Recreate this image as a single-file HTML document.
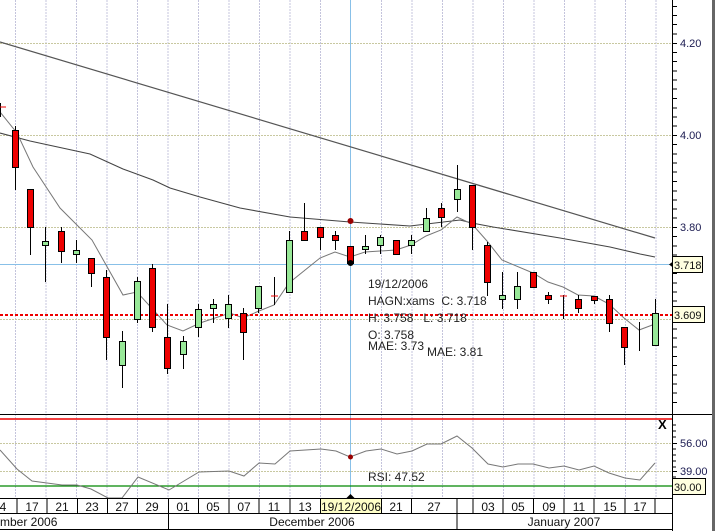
<!DOCTYPE html>
<html><head><meta charset="utf-8"><style>
html,body{margin:0;padding:0;background:#fff;}
svg{display:block;font-family:"Liberation Sans",sans-serif;}
</style></head><body>
<svg width="715" height="531" viewBox="0 0 715 531" xmlns="http://www.w3.org/2000/svg">
<rect width="715" height="531" fill="#fff"/>
<g stroke="#c4c4dc" stroke-width="1" stroke-dasharray="2,1">
<path d="M15.5 0V498M46 0V498M76.5 0V498M107 0V498M137.5 0V498M168 0V498M198.5 0V498M229 0V498M259.5 0V498M290 0V498M320.5 0V498M381.5 0V498M412 0V498M442.5 0V498M473 0V498M503.5 0V498M534 0V498M564.5 0V498M595 0V498M625.5 0V498M656 0V498"/>
</g>
<g stroke="#c8c8a0" stroke-width="1" stroke-dasharray="2,1">
<path d="M0 43.5H672M0 135.5H672M0 227.5H672M0 319.5H672M0 443.5H672M0 471.5H672"/>
</g>
<path d="M350.5 0V498M0 264.5H672" stroke="#88c0e8" stroke-width="1"/>
<path d="M0 42L655 238" stroke="#555" stroke-width="1.2" fill="none"/>
<polyline fill="none" stroke="#444" stroke-width="1.1" points="0,133 30,141 90,154 123,169 153,180 170,188 200,197 240,208 290,217 350,222 410,226 460,220 472,223 493,227 560,238 610,247 640,254 655,257"/>
<polyline fill="none" stroke="#777" stroke-width="1" points="0,112 17,133 33,167 60,208 92,240 123,295 137,292 167,325 183,331 200,323 230,313 243,318 259,311 274,305 289,283 320,258 335,252 350,257 365,252 396,250 411,245 426,236 441,230 457,217 472,224 487,241 502,260 533,273 548,282 563,287 578,295 594,296 609,304 624,318 639,330 655,324"/>
<path d="M0 315H672" stroke="#e00" stroke-width="2" stroke-dasharray="3,2"/>
<g stroke="#000" stroke-width="1">
<path d="M0.5 103V117M15.5 126V190M30.5 189V255M45.5 227V282M61.5 227V263M76.5 240V263M91.5 258V287M106.5 270V360M122.5 331V388M137.5 277V323M152.5 264V332M167.5 304V374M183.5 336V369M198.5 304V337M213.5 299V323M228.5 295V328M243.5 308V360M258.5 286V313M274.5 277V305M289.5 231V292M304.5 203V240M320.5 227V250M335.5 231V250M350.5 246V263M365.5 235V254M380.5 235V254M396.5 240V254M411.5 235V254M426.5 208V231M441.5 203V227M457.5 165V212M472.5 185V250M487.5 242V296M502.5 272V309M517.5 272V309M533.5 272V287M548.5 292V304M563.5 295V319M578.5 295V313M594.5 296V304M609.5 295V332M624.5 327V365M639.5 322V351M655.5 299V345"/>
</g>
<g stroke="#000" stroke-width="1">
<rect x="12.5" y="130.5" width="6" height="37" fill="#e00"/>
<rect x="27.5" y="189.5" width="6" height="38" fill="#e00"/>
<rect x="42.5" y="241.5" width="6" height="4" fill="#98e898"/>
<rect x="58.5" y="231.5" width="6" height="20" fill="#e00"/>
<rect x="73.5" y="250.5" width="6" height="4" fill="#98e898"/>
<rect x="88.5" y="258.5" width="6" height="15" fill="#e00"/>
<rect x="103.5" y="277.5" width="6" height="60" fill="#e00"/>
<rect x="119.5" y="341.5" width="6" height="24" fill="#98e898"/>
<rect x="134.5" y="281.5" width="6" height="38" fill="#98e898"/>
<rect x="149.5" y="268.5" width="6" height="59" fill="#e00"/>
<rect x="164.5" y="337.5" width="6" height="31" fill="#e00"/>
<rect x="180.5" y="341.5" width="6" height="13" fill="#98e898"/>
<rect x="195.5" y="309.5" width="6" height="18" fill="#98e898"/>
<rect x="210.5" y="304.5" width="6" height="4" fill="#98e898"/>
<rect x="225.5" y="304.5" width="6" height="14" fill="#98e898"/>
<rect x="240.5" y="313.5" width="6" height="19" fill="#e00"/>
<rect x="255.5" y="286.5" width="6" height="22" fill="#98e898"/>
<rect x="286.5" y="240.5" width="6" height="52" fill="#98e898"/>
<rect x="301.5" y="231.5" width="6" height="9" fill="#e00"/>
<rect x="317.5" y="227.5" width="6" height="10" fill="#e00"/>
<rect x="332.5" y="235.5" width="6" height="5" fill="#e00"/>
<rect x="347.5" y="246.5" width="6" height="17" fill="#e00"/>
<rect x="362.5" y="246.5" width="6" height="3" fill="#98e898"/>
<rect x="377.5" y="237.5" width="6" height="8" fill="#98e898"/>
<rect x="393.5" y="240.5" width="6" height="14" fill="#e00"/>
<rect x="408.5" y="240.5" width="6" height="5" fill="#98e898"/>
<rect x="423.5" y="218.5" width="6" height="13" fill="#98e898"/>
<rect x="438.5" y="208.5" width="6" height="9" fill="#e00"/>
<rect x="454.5" y="189.5" width="6" height="10" fill="#98e898"/>
<rect x="469.5" y="185.5" width="6" height="42" fill="#e00"/>
<rect x="484.5" y="245.5" width="6" height="37" fill="#e00"/>
<rect x="499.5" y="295.5" width="6" height="4" fill="#98e898"/>
<rect x="514.5" y="286.5" width="6" height="13" fill="#98e898"/>
<rect x="530.5" y="272.5" width="6" height="15" fill="#e00"/>
<rect x="545.5" y="295.5" width="6" height="4" fill="#e00"/>
<rect x="575.5" y="299.5" width="6" height="9" fill="#e00"/>
<rect x="591.5" y="296.5" width="6" height="4" fill="#e00"/>
<rect x="606.5" y="299.5" width="6" height="24" fill="#e00"/>
<rect x="621.5" y="327.5" width="6" height="20" fill="#e00"/>
<rect x="652.5" y="313.5" width="6" height="32" fill="#98e898"/>
</g>
<path d="M271 296H278M560 296H567M0 107H6" stroke="#e00" stroke-width="1"/>
<circle cx="350.5" cy="221" r="3" fill="#900"/>
<circle cx="350.5" cy="263" r="3" fill="#000"/>
<g font-size="12" fill="#222">
<text x="368" y="288">19/12/2006</text>
<text x="368" y="305">HAGN:xams&#160;&#160;C: 3.718</text>
<text x="368" y="322">H: 3.758&#160;&#160;&#160;L: 3.718</text>
<text x="368" y="339">O: 3.758</text>
<text x="368" y="350">MAE: 3.73</text>
<text x="427" y="356">MAE: 3.81</text>
</g>
<path d="M0 414.5H715" stroke="#000" stroke-width="1"/>
<path d="M0 419H672" stroke="#e00" stroke-width="1.5"/>
<path d="M0 486H672" stroke="#080" stroke-width="1.2"/>
<polyline fill="none" stroke="#777" stroke-width="1" points="0,450 17,469 32,481 47,483 62,485 77,485 91,489 108,498 122,498 138,477 169,490 199,472 229,471 244,476 259,463 275,464 290,451 321,449 336,451 350,457 366,451 381,449 397,454 412,451 427,444 441,444 457,436 472,448 488,464 503,467 518,464 533,464 549,468 564,466 579,470 594,466 609,473 625,478 640,480 655,463"/>
<circle cx="350.5" cy="457" r="2.5" fill="#900"/>
<text x="368" y="481" font-size="12" fill="#222">RSI: 47.52</text>
<text x="658" y="429" font-size="13" font-weight="bold" fill="#000">X</text>
<path d="M672.5 0V531" stroke="#000" stroke-width="1"/>
<g stroke="#000" stroke-width="1">
<path d="M672 6.5h5M672 15.5h5M672 24.5h5M672 34h5M672 43.5h5M672 52.5h5M672 61.5h5M672 71h5M672 80h5M672 89h5M672 98.5h5M672 108h5M672 117h5M672 126h5M672 135.5h5M672 144.5h5M672 154h5M672 163h5M672 172h5M672 181.5h5M672 191h5M672 200h5M672 209h5M672 218h5M672 227.5h5M672 236.5h5M672 246h5M672 255h5M672 264.5h5M672 273.5h5M672 283h5M672 292h5M672 301h5M672 310.5h5M672 319.5h5M672 329h5M672 338h5M672 347h5M672 356.5h5M672 365.5h5M672 375h5M672 384h5M672 393h5M672 402.5h5"/>
<path d="M672 425h4M672 431h4M672 437h4M672 443.5h5M672 449h4M672 455h4M672 461h4M672 467h4M672 471.5h5M672 477h4M672 483h4M672 489h4M672 494h4"/>
</g>
<g font-size="11" fill="#1a1a50">
<text x="680" y="47">4.20</text>
<text x="680" y="139">4.00</text>
<text x="680" y="231">3.80</text>
<text x="680" y="447">56.00</text>
<text x="680" y="475">39.00</text>
</g>
<path d="M669 264.5l4-3v6z" fill="#000"/>
<rect x="672.5" y="256.5" width="30" height="16" fill="#ffffe0" stroke="#000"/>
<text x="674" y="269" font-size="11" fill="#111">3.718</text>
<rect x="672.5" y="306.5" width="32" height="16" fill="#ffffe0" stroke="#000"/>
<text x="674" y="319" font-size="11" fill="#111">3.609</text>
<rect x="672.5" y="478.5" width="33" height="16" fill="#ffffe0" stroke="#000"/>
<text x="674" y="491" font-size="11" fill="#111">30.00</text>
<rect x="321" y="499" width="61" height="14" fill="#ffffc8"/>
<path d="M0 498.5H672M0 513.5H672M0 529.5H672" stroke="#000" stroke-width="1"/>
<path d="M350.5 494l4 4h-8z" fill="#000"/>
<g stroke="#000" stroke-width="1">
<path d="M17 499V513M47 499V513M77.5 499V513M107.5 499V513M137.5 499V513M168.5 499V530M198.5 499V513M229 499V513M259 499V513M290 499V513M320.5 499V513M381.5 499V513M411.5 499V513M457 499V530M473 499V513M503 499V513M533.5 499V513M564 499V513M594 499V513M625 499V513M655 499V513"/>
</g>
<g font-size="12" fill="#111" text-anchor="middle">
<text x="3" y="511">4</text><text x="32" y="511">17</text><text x="62" y="511">21</text><text x="92" y="511">23</text><text x="122" y="511">27</text><text x="152" y="511">29</text><text x="183" y="511">01</text><text x="213" y="511">05</text><text x="244" y="511">07</text><text x="274" y="511">11</text><text x="305" y="511">13</text><text x="351" y="511">19/12/2006</text><text x="396" y="511">21</text><text x="434" y="511">27</text><text x="488" y="511">03</text><text x="518" y="511">05</text><text x="549" y="511">09</text><text x="579" y="511">11</text><text x="610" y="511">15</text><text x="640" y="511">17</text>
<text x="312" y="526">December 2006</text>
<text x="564" y="526">January 2007</text>
</g>
<text x="0" y="526" font-size="12" fill="#111">mber 2006</text>
<rect x="712" y="0" width="3" height="531" fill="#666"/>
</svg>
</body></html>
